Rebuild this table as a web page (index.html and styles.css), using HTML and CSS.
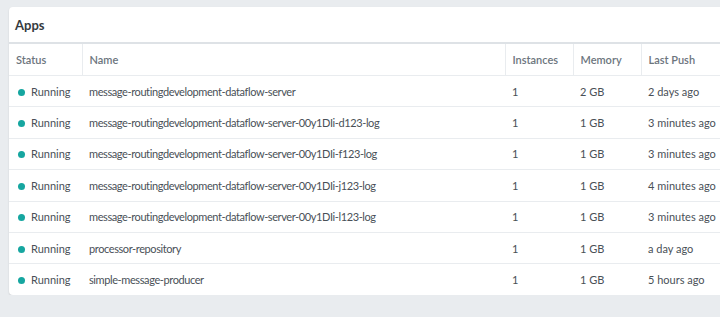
FILE: index.html
```html
<!DOCTYPE html>
<html lang="en">
<head>
    <title>Apps</title>
    <link rel="stylesheet" href="styles.css">
</head>
<body>
    <!--Apps card-->
    <div class="card">
        <div class="card-header">Apps</div>
        <table class="apps-table">
            <colgroup>
                <col class="col-status">
                <col class="col-name">
                <col class="col-inst">
                <col class="col-mem">
                <col class="col-push">
            </colgroup>
            <thead>
                <tr>
                    <th>Status</th>
                    <th>Name</th>
                    <th>Instances</th>
                    <th>Memory</th>
                    <th>Last Push</th>
                </tr>
            </thead>
            <tbody>
                <tr>
                    <td><span class="dot"></span>Running</td>
                    <td class="name">message-routingdevelopment-dataflow-server</td>
                    <td>1</td>
                    <td>2 GB</td>
                    <td>2 days ago</td>
                </tr>
                <tr>
                    <td><span class="dot"></span>Running</td>
                    <td class="name">message-routingdevelopment-dataflow-server-00y1DIi-d123-log</td>
                    <td>1</td>
                    <td>1 GB</td>
                    <td>3 minutes ago</td>
                </tr>
                <tr>
                    <td><span class="dot"></span>Running</td>
                    <td class="name">message-routingdevelopment-dataflow-server-00y1DIi-f123-log</td>
                    <td>1</td>
                    <td>1 GB</td>
                    <td>3 minutes ago</td>
                </tr>
                <tr>
                    <td><span class="dot"></span>Running</td>
                    <td class="name">message-routingdevelopment-dataflow-server-00y1DIi-j123-log</td>
                    <td>1</td>
                    <td>1 GB</td>
                    <td>4 minutes ago</td>
                </tr>
                <tr>
                    <td><span class="dot"></span>Running</td>
                    <td class="name">message-routingdevelopment-dataflow-server-00y1DIi-l123-log</td>
                    <td>1</td>
                    <td>1 GB</td>
                    <td>3 minutes ago</td>
                </tr>
                <tr>
                    <td><span class="dot"></span>Running</td>
                    <td class="name">processor-repository</td>
                    <td>1</td>
                    <td>1 GB</td>
                    <td>a day ago</td>
                </tr>
                <tr>
                    <td><span class="dot"></span>Running</td>
                    <td class="name">simple-message-producer</td>
                    <td>1</td>
                    <td>1 GB</td>
                    <td>5 hours ago</td>
                </tr>
            </tbody>
        </table>
    </div>
</body>
</html>
```
FILE: styles.css
```css
/*global styling*/
* {
    box-sizing: border-box;
    font-family: "Lato", sans-serif;
}

body {
    margin: 0;
    padding: 7px 0 0 9px;
    background-color: #e9ecef;
    overflow: hidden;
}

/*card styling*/
.card {
    width: 730px;
    background-color: #fff;
    border-radius: 4px;
    box-shadow: 0 1px 2px rgba(0, 0, 0, 0.12);
    overflow: hidden;
}

.card-header {
    height: 37px;
    padding: 0 6px;
    display: flex;
    align-items: center;
    font-size: 13px;
    font-weight: 700;
    color: #343a40;
    border-bottom: 2px solid #dee2e6;
}

/*table styling*/
.apps-table {
    width: 100%;
    border-collapse: collapse;
    table-layout: fixed;
    font-size: 11px;
    color: #495057;
}

.col-status { width: 73px; }
.col-name { width: 423px; }
.col-inst { width: 68px; }
.col-mem { width: 68px; }

.apps-table th {
    height: 31.5px;
    padding: 0 7px;
    text-align: left;
    font-weight: 600;
    color: #6c757d;
    border-bottom: 1px solid #e9ecef;
    border-left: 1px solid #e9ecef;
}

.apps-table th:first-child {
    border-left: none;
}

.apps-table td {
    height: 31.4px;
    padding: 0 7px;
    border-bottom: 1px solid #e9ecef;
    white-space: nowrap;
}

.apps-table td.name {
    letter-spacing: -0.4px;
}

.apps-table tr:last-child td {
    border-bottom: none;
}

.dot {
    display: inline-block;
    width: 7px;
    height: 7px;
    margin: 0 6px 0 2px;
    border-radius: 50%;
    background-color: #16a6a0;
}
```
